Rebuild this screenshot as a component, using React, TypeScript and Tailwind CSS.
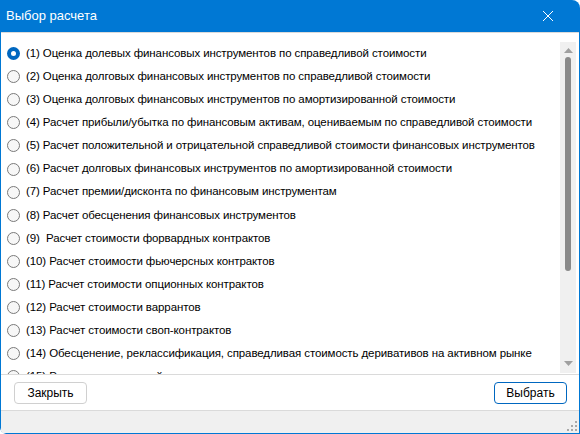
import React, { useState } from 'react';

const calcTypes = [
  '(1) Оценка долевых финансовых инструментов по справедливой стоимости',
  '(2) Оценка долговых финансовых инструментов по справедливой стоимости',
  '(3) Оценка долговых финансовых инструментов по амортизированной стоимости',
  '(4) Расчет прибыли/убытка по финансовым активам, оцениваемым по справедливой стоимости',
  '(5) Расчет положительной и отрицательной справедливой стоимости финансовых инструментов',
  '(6) Расчет долговых финансовых инструментов по амортизированной стоимости',
  '(7) Расчет премии/дисконта по финансовым инструментам',
  '(8) Расчет обесценения финансовых инструментов',
  '(9)  Расчет стоимости форвардных контрактов',
  '(10) Расчет стоимости фьючерсных контрактов',
  '(11) Расчет стоимости опционных контрактов',
  '(12) Расчет стоимости варрантов',
  '(13) Расчет стоимости своп-контрактов',
  '(14) Обесценение, реклассификация, справедливая стоимость деривативов на активном рынке',
  '(15) Расчет справедливой стоимости деривативов на неактивном рынке',
];

function Radio({ checked }: { checked: boolean }) {
  if (checked) {
    return (
      <span className="w-[13px] h-[13px] shrink-0 rounded-full bg-[#0067c0] flex items-center justify-center">
        <span className="w-[5px] h-[5px] rounded-full bg-white" />
      </span>
    );
  }
  return <span className="w-[13px] h-[13px] shrink-0 rounded-full border border-[#7a7a7a] bg-[#f7f7f7]" />;
}

export default function App() {
  const [selected, setSelected] = useState(0);

  return (
    <div
      className="w-[580px] h-[434px] flex flex-col bg-white overflow-hidden rounded-tr-[8px] rounded-bl-[6px] text-[12px] text-black"
      style={{ fontFamily: '"Liberation Sans", Arial, sans-serif' }}
    >
      {/* title bar */}
      <div className="h-[32px] shrink-0 bg-[#0078d4] flex items-center justify-between pl-[6px] pr-[26px]">
        <span className="text-white text-[13px]">Выбор расчета</span>
        <svg width="12" height="12" viewBox="0 0 12 12" className="text-white">
          <path d="M1 1 L11 11 M11 1 L1 11" stroke="currentColor" strokeWidth="1" />
        </svg>
      </div>

      <div className="flex-1 flex flex-col border-x border-b border-[#0078d4] rounded-bl-[6px] min-h-0">
        <div className="h-px bg-[#dadada] shrink-0" />

        {/* list with scrollbar */}
        <div className="flex-1 flex min-h-0 pt-[9px] pr-[3px]">
          <div className="flex-1 overflow-hidden flex flex-col pl-[6px]">
            {calcTypes.map((label, i) => (
              <div
                key={i}
                onClick={() => setSelected(i)}
                className="h-[23.1px] shrink-0 flex items-center gap-[6px] cursor-default whitespace-pre"
              >
                <Radio checked={selected === i} />
                <span className="text-[11.5px] tracking-[-0.1px]">{label}</span>
              </div>
            ))}
          </div>
          <div className="w-[16px] shrink-0 bg-[#f0f0f0] flex flex-col items-center py-[4px] mb-[1px]">
            <svg width="9" height="5" viewBox="0 0 9 5" className="mt-[2px]">
              <path d="M0 5 L4.5 0 L9 5 Z" fill="#a0a0a0" />
            </svg>
            <div className="w-[6px] h-[214px] mt-[4px] rounded-full bg-[#8a8a8a]" />
            <div className="flex-1" />
            <svg width="9" height="5" viewBox="0 0 9 5" className="mb-[3px]">
              <path d="M0 0 L9 0 L4.5 5 Z" fill="#a0a0a0" />
            </svg>
          </div>
        </div>

        <div className="h-px bg-[#dadada] shrink-0" />

        {/* buttons */}
        <div className="h-[35px] shrink-0 flex items-center justify-between pl-[13px] pr-[12px]">
          <button className="w-[73px] h-[22px] rounded-[4px] border border-[#d0d0d0] bg-white text-[12px]">
            Закрыть
          </button>
          <button className="w-[73px] h-[22px] rounded-[4px] border border-[#0067c0] bg-white text-[12px]">
            Выбрать
          </button>
        </div>

        <div className="h-px bg-[#dadada] shrink-0" />

        {/* status strip */}
        <div className="h-[22px] shrink-0 bg-[#f0f0f0] flex items-end justify-end pr-[2px] pb-[2px]">
          <svg width="10" height="10" viewBox="0 0 10 10">
            <rect x="8" y="0" width="2" height="2" fill="#a8a8a8" />
            <rect x="4" y="4" width="2" height="2" fill="#a8a8a8" />
            <rect x="8" y="4" width="2" height="2" fill="#a8a8a8" />
            <rect x="0" y="8" width="2" height="2" fill="#a8a8a8" />
            <rect x="4" y="8" width="2" height="2" fill="#a8a8a8" />
            <rect x="8" y="8" width="2" height="2" fill="#a8a8a8" />
          </svg>
        </div>
      </div>
    </div>
  );
}
